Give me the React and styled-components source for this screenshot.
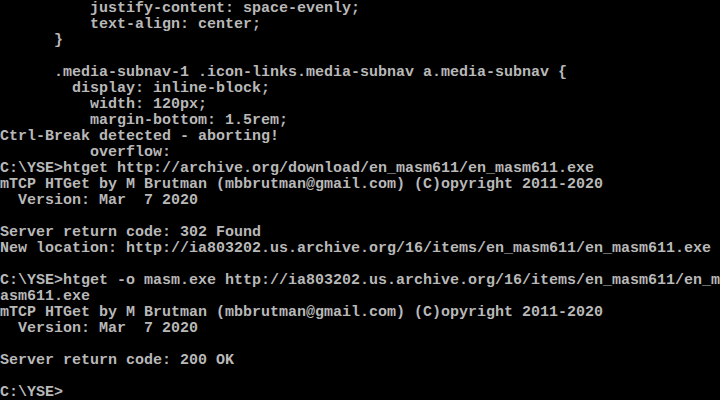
import React from "react";
import styled, { createGlobalStyle } from "styled-components";

const Global = createGlobalStyle`
  html, body { margin: 0; padding: 0; background: #000; }
  #root { width: 720px; height: 400px; }
`;

const Screen = styled.div`
  width: 720px;
  height: 400px;
  background: #000;
  display: flex;
  flex-direction: column;
  overflow: hidden;
`;

const Line = styled.div`
  height: 16px;
  line-height: 16px;
  padding-top: 1px;
  box-sizing: border-box;
  white-space: pre;
  font-family: "Liberation Mono", "DejaVu Sans Mono", monospace;
  font-size: 15px;
  font-weight: bold;
  color: #b8b8b8;
`;

const lines = [
  "          justify-content: space-evenly;",
  "          text-align: center;",
  "      }",
  "",
  "      .media-subnav-1 .icon-links.media-subnav a.media-subnav {",
  "        display: inline-block;",
  "          width: 120px;",
  "          margin-bottom: 1.5rem;",
  "Ctrl-Break detected - aborting!",
  "          overflow:",
  "C:\\YSE>htget http://archive.org/download/en_masm611/en_masm611.exe",
  "mTCP HTGet by M Brutman (mbbrutman@gmail.com) (C)opyright 2011-2020",
  "  Version: Mar  7 2020",
  "",
  "Server return code: 302 Found",
  "New location: http://ia803202.us.archive.org/16/items/en_masm611/en_masm611.exe",
  "",
  "C:\\YSE>htget -o masm.exe http://ia803202.us.archive.org/16/items/en_masm611/en_m",
  "asm611.exe",
  "mTCP HTGet by M Brutman (mbbrutman@gmail.com) (C)opyright 2011-2020",
  "  Version: Mar  7 2020",
  "",
  "Server return code: 200 OK",
  "",
  "C:\\YSE>",
];

export default function App() {
  return (
    <>
      <Global />
      <Screen>
        {lines.map((l, i) => (
          <Line key={i}>{l}</Line>
        ))}
      </Screen>
    </>
  );
}
